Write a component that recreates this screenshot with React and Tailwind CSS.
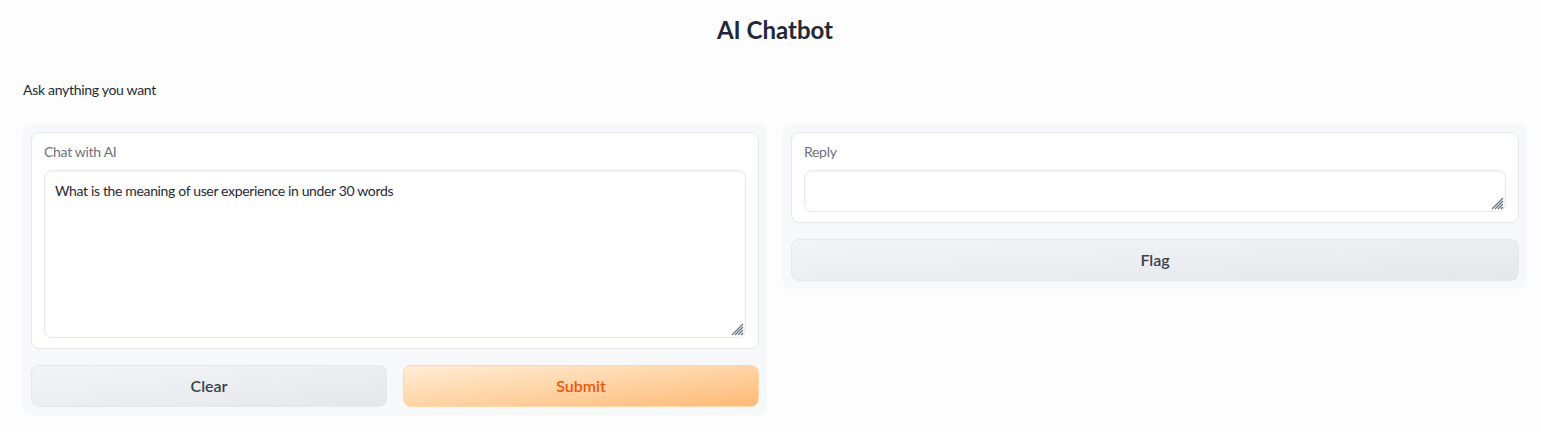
const font = { fontFamily: "Lato, 'Noto Sans', sans-serif" };

function ResizeGrip() {
  return (
    <svg
      className="pointer-events-none absolute bottom-[1px] right-[1px]"
      width="13"
      height="13"
      viewBox="0 0 13 13"
    >
      <g stroke="#6b7280" strokeWidth="1.2">
        <line x1="1" y1="12" x2="12" y2="1" />
        <line x1="4" y1="12" x2="12" y2="4" />
        <line x1="7" y1="12" x2="12" y2="7" />
        <line x1="10" y1="12" x2="12" y2="10" />
      </g>
    </svg>
  );
}

function Field({ label, value, height }) {
  return (
    <div className="rounded-lg border border-[#e5e7eb] bg-white px-3 pt-[9px] pb-[10px]">
      <div className="text-sm leading-5 tracking-[-0.3px] text-[#6b7280]">
        {label}
      </div>
      <div
        className={`relative mt-2 rounded-lg border border-[#e5e7eb] bg-white px-[10px] pt-[10px] text-sm leading-5 tracking-[-0.35px] text-[#1f2937] shadow-[inset_0_1px_2px_rgba(0,0,0,0.05)] ${height}`}
      >
        {value}
        <ResizeGrip />
      </div>
    </div>
  );
}

function Button({ children, primary }) {
  return (
    <button
      className={
        primary
          ? "h-[42px] flex-1 rounded-lg border border-[#fed7aa] bg-gradient-to-br from-[#ffedd5] to-[#fdba74] text-base font-semibold text-[#ea580c]"
          : "h-[42px] flex-1 rounded-lg border border-[#e5e7eb] bg-gradient-to-br from-[#f3f4f6] to-[#e5e7eb] text-base font-semibold text-[#374151]"
      }
    >
      {children}
    </button>
  );
}

export default function App() {
  return (
    <div
      className="min-h-[432px] bg-[#fdfdfd] pl-[23px] pr-[14px] pt-[14px]"
      style={font}
    >
      <h1 className="text-center text-2xl font-bold leading-8 text-[#1f2937]">
        AI Chatbot
      </h1>
      <p className="mt-[34px] text-sm leading-5 tracking-[-0.3px] text-[#1f2937]">
        Ask anything you want
      </p>

      <div className="mt-6 flex items-start gap-4">
        {/* Inputs */}
        <div className="flex flex-1 flex-col gap-4 rounded-lg bg-[#f7f8f9] p-2">
          <Field
            label="Chat with AI"
            value="What is the meaning of user experience in under 30 words"
            height="h-[168px]"
          />
          <div className="flex gap-4">
            <Button>Clear</Button>
            <Button primary>Submit</Button>
          </div>
        </div>

        {/* Output */}
        <div className="flex flex-1 flex-col gap-4 rounded-lg bg-[#f7f8f9] p-2">
          <Field label="Reply" value="" height="h-[42px]" />
          <div className="flex">
            <Button>Flag</Button>
          </div>
        </div>
      </div>
    </div>
  );
}
